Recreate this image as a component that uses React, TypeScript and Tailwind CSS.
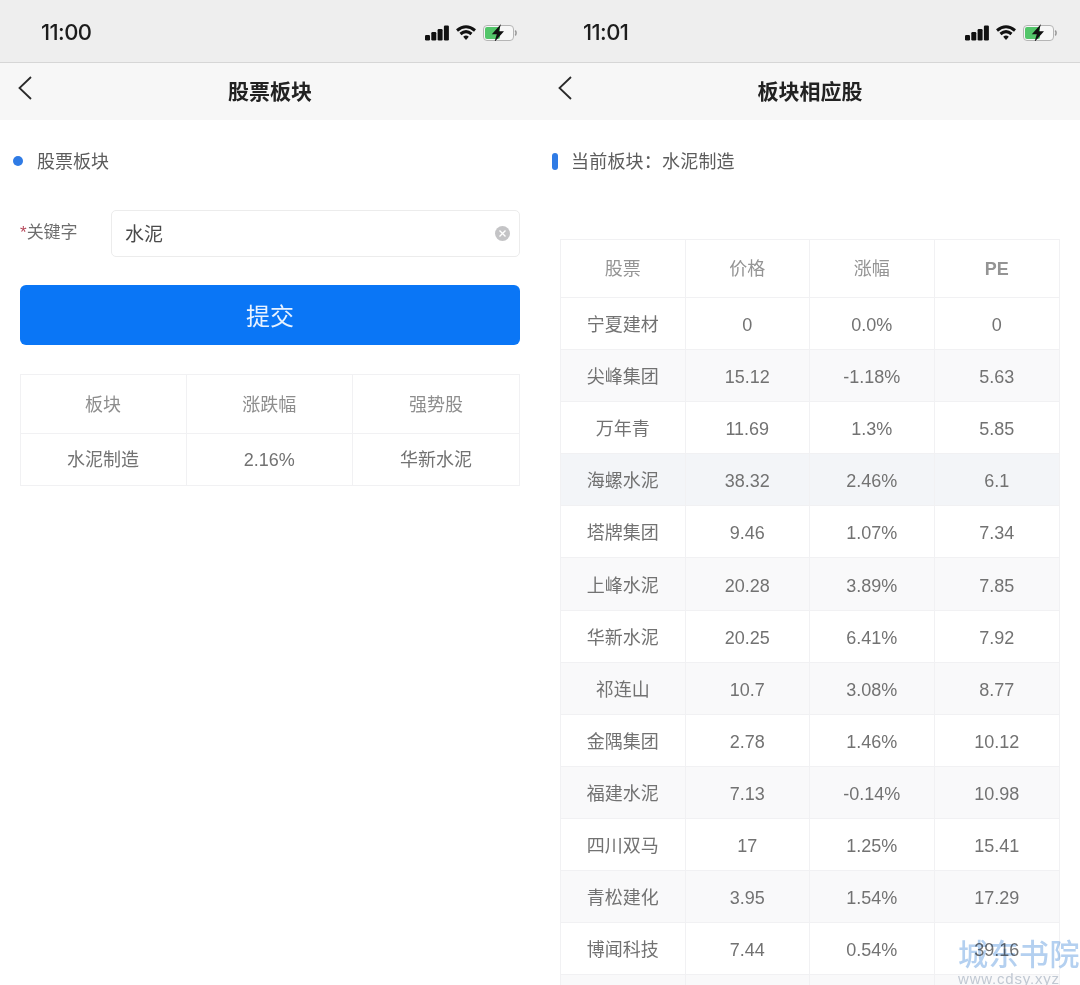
const FONT = "font-['Liberation_Sans','Noto_Sans_CJK_SC',sans-serif]";

const stocks = [
  ["宁夏建材", "0", "0.0%", "0"],
  ["尖峰集团", "15.12", "-1.18%", "5.63"],
  ["万年青", "11.69", "1.3%", "5.85"],
  ["海螺水泥", "38.32", "2.46%", "6.1"],
  ["塔牌集团", "9.46", "1.07%", "7.34"],
  ["上峰水泥", "20.28", "3.89%", "7.85"],
  ["华新水泥", "20.25", "6.41%", "7.92"],
  ["祁连山", "10.7", "3.08%", "8.77"],
  ["金隅集团", "2.78", "1.46%", "10.12"],
  ["福建水泥", "7.13", "-0.14%", "10.98"],
  ["四川双马", "17", "1.25%", "15.41"],
  ["青松建化", "3.95", "1.54%", "17.29"],
  ["博闻科技", "7.44", "0.54%", "39.16"],
  ["", "", "", ""],
];

const StatusIcons = () => (
  <svg width="93" height="20" viewBox="0 0 93 20">
    <rect x="0" y="14" width="5" height="5.5" rx="1.2" fill="#111" />
    <rect x="6.3" y="11" width="5" height="8.5" rx="1.2" fill="#111" />
    <rect x="12.6" y="8" width="5" height="11.5" rx="1.2" fill="#111" />
    <rect x="18.9" y="4.5" width="5" height="15" rx="1.2" fill="#111" />
    <path d="M32 9.5 Q41 2 50 9.5" fill="none" stroke="#111" strokeWidth="3" />
    <path d="M35.5 13 Q41 8.2 46.5 13" fill="none" stroke="#111" strokeWidth="3" />
    <path d="M38.2 15.8 L41 19 L43.8 15.8 Q41 13.4 38.2 15.8 Z" fill="#111" />
    <rect x="58.5" y="4.5" width="30" height="15" rx="3.5" fill="#f7f7f7" stroke="#b5b5b5" />
    <rect x="60" y="6" width="15" height="12" rx="2" fill="#52c569" />
    <path d="M90.3 9.5 Q92 12 90.3 14.5" fill="none" stroke="#999" strokeWidth="1.4" />
    <path d="M76 3 L66.8 13.2 H71.8 L69.5 21 L79 10.2 H73.8 Z" fill="#111" />
  </svg>
);

const Header = ({ time, title, timeClass }: { time: string; title: string; timeClass: string }) => (
  <>
    <div className="h-[63px] bg-[#eeeeee] border-b border-[#d6d6d6] flex items-center justify-between pr-[22px]">
      <span className={`text-[22px] pt-[2px] font-medium font-['Inter',sans-serif] tracking-[-0.6px] text-[#1c1c1c] ${timeClass}`}>{time}</span>
      <StatusIcons />
    </div>
    <div className="h-[57px] bg-[#f7f7f7] relative flex items-center justify-center">
      <svg className="absolute left-[17px] top-[12px]" width="16" height="26" viewBox="0 0 16 26">
        <path d="M14 2 L2.5 13 L14 24" fill="none" stroke="#2a2a2a" strokeWidth="1.8" />
      </svg>
      <span className="text-[21px] font-bold text-[#222]">{title}</span>
    </div>
  </>
);

const Cell = ({ children, last, className }: { children?: React.ReactNode; last?: boolean; className?: string }) => (
  <div className={`flex items-center justify-center ${last ? "" : "border-r border-[#f1f1f3]"} ${className ?? ""}`}>
    {children}
  </div>
);

const SectorPanel = () => (
  <div className="w-[540px] shrink-0">
    <Header time="11:00" title="股票板块" timeClass="pl-[41px]" />
    <div className="flex items-center h-[26px] mt-[28px] pl-[13px]">
      <span className="w-[10px] h-[10px] rounded-full bg-[#2f7be5]" />
      <span className="ml-[14px] pt-[2px] text-[18px] text-[#5c5c5c]">股票板块</span>
    </div>
    <div className="flex items-center mt-[36px] pl-[20px] pr-[20px]">
      <div className="w-[91px] text-[17px] text-[#6e6e6e] -mt-[1px]">
        <span className="text-[#b5485a]">*</span>关键字
      </div>
      <div className="flex-1 h-[47px] rounded-[5px] border border-[#ececec] flex items-center justify-between pl-[13px] pr-[9px]">
        <span className="text-[19px] pt-[4px] text-[#4a4a4a]">水泥</span>
        <span className="w-[15px] h-[15px] rounded-full bg-[#c4c4c6] flex items-center justify-center">
          <svg width="9" height="9" viewBox="0 0 9 9">
            <path d="M1.5 1.5 L7.5 7.5 M7.5 1.5 L1.5 7.5" stroke="#fff" strokeWidth="1.4" />
          </svg>
        </span>
      </div>
    </div>
    <div className="mt-[28px] mx-[20px] h-[60px] rounded-[6px] bg-[#0a76f6] flex items-center justify-center pt-[4px] text-[24px] text-[#e8f2ff]">
      提交
    </div>
    <div className="mt-[29px] ml-[19.5px] mr-[20px] border border-[#f1f1f3] text-[18px] text-[#727272]">
      <div className="grid grid-cols-3 h-[59px] border-b border-[#f1f1f3] text-[#8e8e8e]">
        <Cell className="pt-[2px]">板块</Cell>
        <Cell className="pt-[2px]">涨跌幅</Cell>
        <Cell last className="pt-[2px]">强势股</Cell>
      </div>
      <div className="grid grid-cols-3 h-[51px]">
        <Cell className="pt-[2px]">水泥制造</Cell>
        <Cell className="pt-[2px]">2.16%</Cell>
        <Cell last className="pt-[2px]">华新水泥</Cell>
      </div>
    </div>
  </div>
);

const StockPanel = () => (
  <div className="w-[540px] shrink-0 relative">
    <Header time="11:01" title="板块相应股" timeClass="pl-[43px]" />
    <div className="flex items-center h-[26px] mt-[28px] pl-[12px]">
      <span className="w-[6px] h-[17px] rounded-[3px] bg-[#2f7be5]" />
      <span className="ml-[13px] pt-[2px] text-[18px] tracking-[0.2px] text-[#5c5c5c]">当前板块：水泥制造</span>
    </div>
    <div className="mt-[65px] ml-[20px] w-[500px] border border-[#f1f1f3] border-b-0 text-[18px] text-[#727272]">
      <div className="grid grid-cols-4 h-[58px] border-b border-[#f1f1f3] text-[#949494]">
        <Cell className="pt-[2px]">股票</Cell>
        <Cell className="pt-[2px]">价格</Cell>
        <Cell className="pt-[2px]">涨幅</Cell>
        <Cell last className="pt-[2px] font-bold">PE</Cell>
      </div>
      {stocks.map((row, i) => (
        <div
          key={i}
          className={`grid grid-cols-4 h-[52.1px] border-b border-[#f1f1f3] ${
            i === 3 ? "bg-[#f3f5f8]" : i % 2 === 1 ? "bg-[#f9f9fa]" : "bg-white"
          }`}
        >
          {row.map((v, j) => (
            <Cell key={j} last={j === 3} className="pt-[4px]">
              {v}
            </Cell>
          ))}
        </div>
      ))}
    </div>
    <div className="absolute left-[418px] top-[938px] w-[125px] mix-blend-multiply">
      <div className="text-[30px] leading-[34px] tracking-[0.5px] font-medium text-[#b4d0f0] whitespace-nowrap">城东书院</div>
      <div className="text-[15px] leading-[14px] tracking-[0.8px] text-[#c6ced8] whitespace-nowrap">www.cdsy.xyz</div>
    </div>
  </div>
);

export default function App() {
  return (
    <div className={`w-[1080px] h-[985px] overflow-hidden flex bg-white ${FONT}`}>
      <SectorPanel />
      <StockPanel />
    </div>
  );
}
